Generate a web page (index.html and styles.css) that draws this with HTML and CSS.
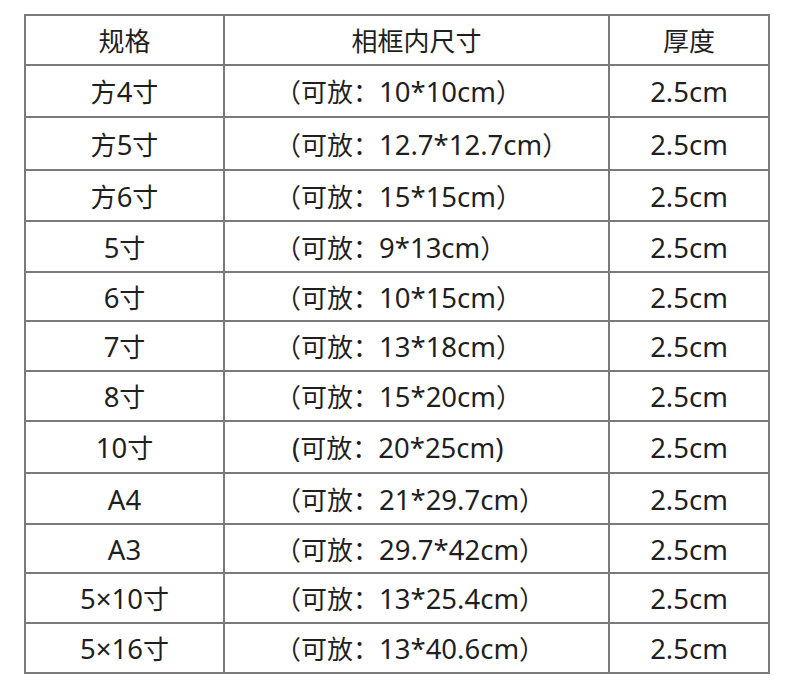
FILE: index.html
```html
<!DOCTYPE html>
<html lang="zh-CN">
<head>
<meta charset="utf-8">
<title>相框尺寸表</title>
<link rel="stylesheet" href="styles.css">
</head>
<body>
<table class="size-table">
  <colgroup>
    <col class="col-spec">
    <col class="col-inner">
    <col class="col-depth">
  </colgroup>
  <thead>
    <tr><th>规格</th><th>相框内尺寸</th><th>厚度</th></tr>
  </thead>
  <tbody>
    <tr class="tall"><td>方<span class="num">4</span>寸</td><td class="inner">（可放：<span class="num">10*10cm</span>）</td><td><span class="num">2.5cm</span></td></tr>
    <tr class="taller"><td>方<span class="num">5</span>寸</td><td class="inner">（可放：<span class="num">12.7*12.7cm</span>）</td><td><span class="num">2.5cm</span></td></tr>
    <tr class="mid"><td>方<span class="num">6</span>寸</td><td class="inner">（可放：<span class="num">15*15cm</span>）</td><td><span class="num">2.5cm</span></td></tr>
    <tr class="mid"><td><span class="num">5</span>寸</td><td class="inner">（可放：<span class="num">9*13cm</span>）</td><td><span class="num">2.5cm</span></td></tr>
    <tr class="short"><td><span class="num">6</span>寸</td><td class="inner">（可放：<span class="num">10*15cm</span>）</td><td><span class="num">2.5cm</span></td></tr>
    <tr><td><span class="num">7</span>寸</td><td class="inner">（可放：<span class="num">13*18cm</span>）</td><td><span class="num">2.5cm</span></td></tr>
    <tr><td><span class="num">8</span>寸</td><td class="inner">（可放：<span class="num">15*20cm</span>）</td><td><span class="num">2.5cm</span></td></tr>
    <tr class="tall"><td><span class="num">10</span>寸</td><td class="inner half"><span class="num">(</span>可放：<span class="num">20*25cm)</span></td><td><span class="num">2.5cm</span></td></tr>
    <tr class="mid"><td><span class="num">A4</span></td><td class="inner">（可放：<span class="num">21*29.7cm</span>）</td><td><span class="num">2.5cm</span></td></tr>
    <tr class="short"><td><span class="num">A3</span></td><td class="inner">（可放：<span class="num">29.7*42cm</span>）</td><td><span class="num">2.5cm</span></td></tr>
    <tr><td><span class="num">5×10</span>寸</td><td class="inner">（可放：<span class="num">13*25.4cm</span>）</td><td><span class="num">2.5cm</span></td></tr>
    <tr><td><span class="num">5×16</span>寸</td><td class="inner">（可放：<span class="num">13*40.6cm</span>）</td><td><span class="num">2.5cm</span></td></tr>
  </tbody>
</table>
</body>
</html>
```
FILE: styles.css
```css
html, body {
  margin: 0;
  padding: 0;
  background: #ffffff;
}

body {
  padding: 14px 0 0 24px;
  font-family: "Noto Sans", "Noto Sans CJK SC", sans-serif;
  color: #1f1f1f;
}

.size-table {
  border-collapse: collapse;
  width: 744px;
  table-layout: fixed;
}

.col-spec { width: 199px; }
.col-inner { width: 385px; }
.col-depth { width: 160px; }

.size-table tr { height: 50px; }
.size-table tr.short { height: 49px; }
.size-table tr.mid { height: 51px; }
.size-table tr.tall { height: 52px; }
.size-table tr.taller { height: 53px; }

.size-table th,
.size-table td {
  border: 2px solid #7a7a7a;
  padding: 2px 0 0 0;
  font-size: 26px;
  font-weight: 400;
  text-align: center;
  vertical-align: middle;
  line-height: 1;
  box-sizing: border-box;
  white-space: nowrap;
}

.size-table .num {
  font-size: 27.5px;
}

.size-table td.inner {
  text-align: left;
  padding-left: 50px;
}

.size-table td.inner.half {
  padding-left: 67px;
}
```
